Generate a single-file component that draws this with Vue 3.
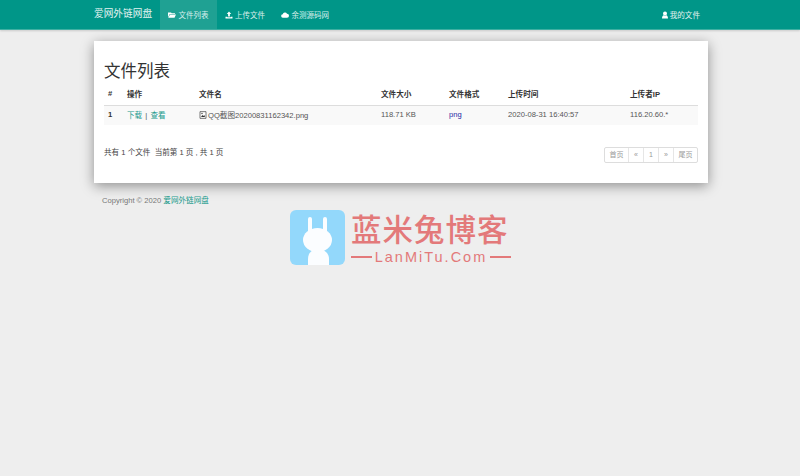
<script setup>
const navItems = [
  { label: '文件列表', icon: 'folder', active: true },
  { label: '上传文件', icon: 'upload', active: false },
  { label: '余测源码网', icon: 'cloud', active: false }
]
</script>

<template>
  <div class="page">
    <nav class="navbar">
      <a class="brand">爱网外链网盘</a>
      <ul class="nav">
        <li v-for="item in navItems" :key="item.label" :class="{ active: item.active }">
          <svg v-if="item.icon === 'folder'" class="nav-icon" viewBox="0 0 16 16">
            <path d="M0 3h6l1.500 1.500H14V6H3.500L0 12.500z M4 7h12l-3 6.500H0.500z" fill="#fff" />
          </svg>
          <svg v-else-if="item.icon === 'upload'" class="nav-icon" viewBox="0 0 16 16">
            <path d="M8 1l4.500 5H9.800v5H6.200V6H3.500z M1 11.500h3.500v1h7v-1H15V15H1z" fill="#fff" />
          </svg>
          <svg v-else class="nav-icon" viewBox="0 0 16 16">
            <path d="M4 13.500a3.500 3.500 0 0 1-.5-7A4.500 4.500 0 0 1 12 5.500a4 4 0 0 1 0 8z" fill="#fff" />
          </svg>
          {{ item.label }}
        </li>
      </ul>
      <div class="nav-right">
        <svg class="nav-icon" viewBox="0 0 16 16">
          <path d="M8 1a3.500 3.500 0 0 1 0 8a3.500 3.500 0 0 1 0-8z M2 15c0-4 1.500-6 3.500-6.500a4 4 0 0 0 5 0C12.500 9 14 11 14 15z" fill="#fff" />
        </svg>
        我的文件
      </div>
    </nav>

    <main class="container">
      <section class="card">
        <h1 class="title">文件列表</h1>
        <table class="table">
          <thead>
            <tr>
              <th class="col-id">#</th>
              <th class="col-op">操作</th>
              <th class="col-name">文件名</th>
              <th class="col-size">文件大小</th>
              <th class="col-type">文件格式</th>
              <th class="col-time">上传时间</th>
              <th>上传者IP</th>
            </tr>
          </thead>
          <tbody>
            <tr>
              <td class="strong">1</td>
              <td><a class="link">下载</a> <span class="sep">|</span> <a class="link">查看</a></td>
              <td>
                <svg class="file-icon" viewBox="0 0 12 12">
                  <path d="M1.500 1h9v10h-9z" fill="#fff" stroke="#333" stroke-width="1" />
                  <path d="M3 9l2-3 1.500 1.500L8 6l1 3z" fill="#333" />
                  <circle cx="4.500" cy="3.800" r="1" fill="#333" />
                </svg>QQ截图20200831162342.png
              </td>
              <td>118.71 KB</td>
              <td><a class="type-link">png</a></td>
              <td>2020-08-31 16:40:57</td>
              <td>116.20.60.*</td>
            </tr>
          </tbody>
        </table>
        <div class="footer-row">
          <div class="summary">共有 1 个文件&nbsp;&nbsp;当前第 1 页 , 共 1 页</div>
          <div class="pager">
            <span>首页</span>
            <span>«</span>
            <span>1</span>
            <span>»</span>
            <span>尾页</span>
          </div>
        </div>
      </section>
      <p class="copyright">Copyright © 2020 <a class="link">爱网外链网盘</a></p>
    </main>

    <!-- 图片水印 -->
    <div class="watermark">
      <svg class="wm-logo" viewBox="0 0 55 55" width="55" height="55">
        <rect width="55" height="55" rx="6" fill="#93d8fb" />
        <rect x="18" y="7" width="4" height="20" rx="2" fill="#fbfdff" />
        <rect x="33" y="7" width="4" height="20" rx="2" fill="#fbfdff" />
        <ellipse cx="27.500" cy="30" rx="14.500" ry="12" fill="#fbfdff" />
        <path d="M18 55V49c0-6 4-10 10-10s11 4 11 10v6z" fill="#fbfdff" />
      </svg>
      <div class="wm-text">
        <div class="wm-title">蓝米兔博客</div>
        <div class="wm-sub"><i></i><span>LanMiTu.Com</span><i></i></div>
      </div>
    </div>
  </div>
</template>

<style scoped>
.page {
  position: relative;
  min-height: 476px;
  background-color: #eeeeee;
  font-family: "Liberation Sans", "Noto Sans CJK SC", sans-serif;
  font-size: 7.600px;
  color: #333;
}

.navbar {
  display: flex;
  align-items: stretch;
  box-sizing: border-box;
  height: 30px;
  padding: 0 100px 0 94px;
  background-color: #009688;
  border-bottom: 1px solid #3fb0a3;
  color: #fff;
  box-shadow: 0 1px 2px rgba(0, 0, 0, 0.15);
}

.brand {
  width: 66px;
  font-size: 9.700px;
  line-height: 28px;
  color: #e3f3f1;
  white-space: nowrap;
}

.nav {
  display: flex;
  list-style: none;
  margin: 0;
  padding: 0;
}

.nav li {
  display: flex;
  align-items: center;
  gap: 2.500px;
  padding: 0 8px;
  font-size: 7.500px;
  color: #d9efec;
  white-space: nowrap;
}

.nav li.active {
  background-color: #1fa193;
}

.nav-icon {
  width: 8px;
  height: 8px;
  flex: none;
}

.nav-right {
  display: flex;
  align-items: center;
  gap: 1px;
  margin-left: auto;
  color: #e3f3f1;
}

.container {
  width: 614px;
  margin: 11px 0 0 94px;
}

.card {
  box-sizing: border-box;
  height: 142px;
  padding: 20px 10px 0;
  background-color: #fff;
  box-shadow: 0 3px 12px rgba(0, 0, 0, 0.4);
}

.title {
  margin: 0;
  font-size: 16.500px;
  font-weight: 400;
  line-height: 20px;
  color: #333;
}

.table {
  width: 594px;
  margin-top: 3px;
  border-collapse: collapse;
  table-layout: fixed;
}

.table th,
.table td {
  padding: 0 0 2px 4px;
  text-align: left;
  white-space: nowrap;
}

.table th {
  height: 21px;
  box-sizing: border-box;
  font-weight: 700;
  border-bottom: 1.500px solid #ddd;
}

.table td {
  height: 20px;
  box-sizing: border-box;
  background-color: #f9f9f9;
  color: #555;
}

.col-id {
  width: 19px;
}

.col-op {
  width: 72px;
}

.col-name {
  width: 182px;
}

.col-size {
  width: 68px;
}

.col-type {
  width: 59px;
}

.col-time {
  width: 122px;
}

.strong {
  font-weight: 700;
  color: #333 !important;
}

.link {
  color: #1a9a8c;
}

.sep {
  margin: 0 1px;
  color: #555;
}

.type-link {
  color: #2a2aa5;
}

.file-icon {
  width: 8px;
  height: 8px;
  margin-right: 1px;
  vertical-align: -1px;
}

.footer-row {
  display: flex;
  justify-content: space-between;
  align-items: flex-start;
  margin-top: 20px;
}

.summary {
  margin-top: 2px;
  line-height: 12px;
  color: #444;
}

.pager {
  display: flex;
  margin-top: 2px;
  border: 1px solid #ddd;
  border-radius: 2px;
  color: #999;
  font-size: 7px;
}

.pager span {
  box-sizing: border-box;
  width: 15px;
  height: 14px;
  line-height: 14px;
  text-align: center;
  border-left: 1px solid #e6e6e6;
}

.pager span:first-child {
  width: 23px;
  border-left: 0;
}

.pager span:last-child {
  width: 24px;
}

.copyright {
  margin: 13px 0 0 8px;
  line-height: 10px;
  color: #777;
}

.watermark {
  position: absolute;
  left: 290px;
  top: 210px;
  display: flex;
  gap: 6px;
}

.wm-title {
  margin-top: 2px;
  font-size: 30.500px;
  font-weight: 500;
  line-height: 36px;
  letter-spacing: 1px;
  color: #e3797a;
  white-space: nowrap;
}

.wm-sub {
  display: flex;
  align-items: center;
  gap: 3px;
  width: 160px;
  margin-top: 1px;
  color: #e3797a;
  font-size: 14.500px;
  line-height: 16px;
  letter-spacing: 2px;
  white-space: nowrap;
}

.wm-sub i {
  flex: 1;
  height: 2px;
  background-color: #e3797a;
}
</style>

<style>
body {
  background-color: #eeeeee;
}
</style>
